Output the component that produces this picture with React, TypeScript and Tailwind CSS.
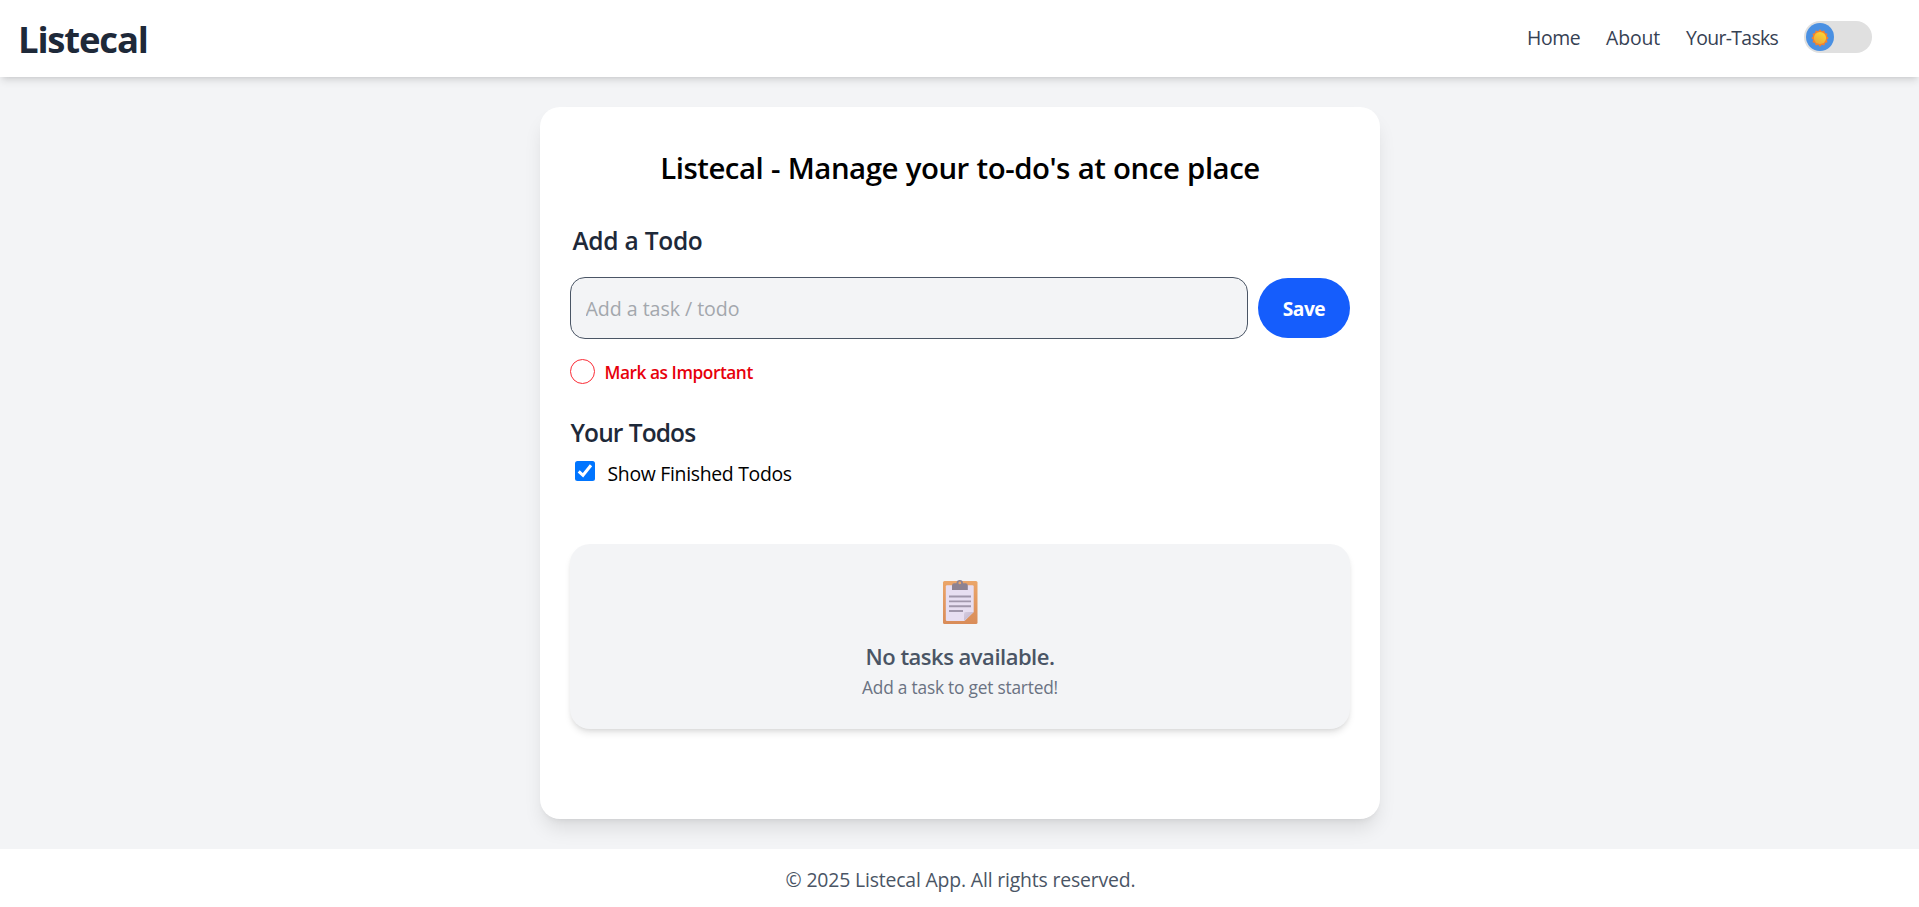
import { useState } from 'react';

function SunIcon() {
  const points = Array.from({ length: 24 }, (_, i) => {
    const r = i % 2 === 0 ? 8.7 : 7;
    const a = (i * Math.PI) / 12 - Math.PI / 2;
    return `${(9 + r * Math.cos(a)).toFixed(2)},${(9 + r * Math.sin(a)).toFixed(2)}`;
  }).join(' ');
  return (
    <svg viewBox="0 0 18 18" className="mt-[2px] size-[18px]" aria-hidden="true">
      <defs>
        <linearGradient id="sun" x1="0.8" y1="0.1" x2="0.3" y2="1">
          <stop offset="0" stopColor="#fbd535" />
          <stop offset="1" stopColor="#e9a83a" />
        </linearGradient>
      </defs>
      <polygon points={points} fill="#f5822c" />
      <circle cx="9" cy="9" r="6.1" fill="url(#sun)" />
    </svg>
  );
}

function ClipboardIcon() {
  return (
    <svg viewBox="0 0 36 44" className="h-[44px] w-[36px]" aria-hidden="true">
      <defs>
        <linearGradient id="board" x1="0" y1="0" x2="0" y2="1">
          <stop offset="0" stopColor="#eba66a" />
          <stop offset="1" stopColor="#d98c59" />
        </linearGradient>
        <linearGradient id="fold" x1="0" y1="0" x2="1" y2="1">
          <stop offset="0" stopColor="#d6cde1" />
          <stop offset="0.6" stopColor="#c6bad0" />
        </linearGradient>
      </defs>
      <rect x="1" y="1" width="34.5" height="43" rx="1.5" fill="url(#board)" />
      <path d="M5 5.300h25.500a1.200 1.200 0 0 1 1.200 1.200V32L22.500 41H5a1.200 1.200 0 0 1-1.200-1.200V6.500A1.200 1.200 0 0 1 5 5.300Z" fill="#e7def1" />
      <path d="M22 41V33.600a1.600 1.600 0 0 1 1.600-1.600h8.100Z" fill="url(#fold)" />
      <path d="M7 16.500h22M7 21.400h22M7 26.300h22M7 31h14" stroke="#a096ab" strokeWidth="1.900" />
      <path fillRule="evenodd" d="M14.500 3.200C14.500 1 15.800 0 17.800 0S21 1 21 3.200h2.500a2.300 2.300 0 0 1 2.300 2.300V10H10V5.500a2.300 2.300 0 0 1 2.300-2.300ZM17.800 1.500a1.400 1.400 0 1 0 0 2.800 1.400 1.400 0 0 0 0-2.800Z" fill="#8d8291" />
    </svg>
  );
}

function Navbar() {
  return (
    <nav className="relative flex h-[77px] shrink-0 items-center justify-between bg-white pr-[47px] pl-[18px] shadow-[0_5px_7.5px_-1.25px_rgba(0,0,0,0.1),0_2.5px_5px_-2.5px_rgba(0,0,0,0.1)]">
      <div className="text-[36.5px] leading-[50px] font-bold tracking-[-1.2px] text-gray-800">Listecal</div>
      <div className="mb-[3px] flex items-center gap-[25px] text-[19.4px] leading-[30px] whitespace-nowrap text-gray-700">
        <a className="w-[54px] pt-[2px] tracking-[-0.4px]">Home</a>
        <a className="w-[55px] pt-[2px] tracking-[-0.1px]">About</a>
        <a className="w-[93px] pt-[2px] tracking-[-0.65px]">Your-Tasks</a>
        <div className="flex h-[32px] w-[68px] items-center rounded-full bg-[#e0e0e0] p-[2px]">
          <div className="flex size-[28px] items-center justify-center rounded-full bg-[#4a90e2]">
            <SunIcon />
          </div>
        </div>
      </div>
    </nav>
  );
}

function CheckBox({ checked, onToggle }: { checked: boolean; onToggle: () => void }) {
  return (
    <button
      onClick={onToggle}
      className={checked ? 'size-[20px] rounded-[2.5px] bg-[#0075ff]' : 'size-[20px] rounded-[2.5px] border border-gray-500 bg-white'}
    >
      {checked && (
        <svg viewBox="0 0 20 20" className="size-[20px]" fill="none" stroke="white" strokeWidth="3" aria-hidden="true">
          <path d="M3.700 10.300 8 14.300 16 4.300" />
        </svg>
      )}
    </button>
  );
}

export default function App() {
  const [showFinished, setShowFinished] = useState(true);
  return (
    <div className="flex h-[907px] flex-col overflow-hidden bg-gray-100 font-['Open_Sans','Noto_Sans',sans-serif] text-black">
      <Navbar />
      <main className="flex flex-1 justify-center py-[30px]">
        <section className="flex w-[840px] flex-col rounded-[20px] bg-white px-[30px] pt-[41px] shadow-[0_12.5px_18.75px_-3.75px_rgba(0,0,0,0.1),0_5px_7.5px_-5px_rgba(0,0,0,0.1)]">
          <h1 className="pl-[1px] text-center text-[29.4px] leading-[40px] font-semibold tracking-[-0.48px] [word-spacing:0.6px]">
            Listecal - Manage your to-do's at once place
          </h1>
          <h2 className="mt-[34px] ml-[3px] text-[24.5px] leading-[37px] font-semibold tracking-[-0.38px] [word-spacing:0.5px] text-gray-800">Add a Todo</h2>
          <div className="mt-[18px] flex items-center gap-[10px]">
            <input
              placeholder="Add a task / todo"
              className="h-[62px] min-w-0 flex-1 rounded-[15px] border border-gray-600 bg-gray-100 px-[15px] text-[19.6px] tracking-[-0.05px] outline-none placeholder:text-[#a3a7ad]"
            />
            <button className="h-[60px] w-[92px] rounded-full bg-[#155dfc] pt-[2px] pl-[1px] text-[19.2px] font-bold tracking-[-0.5px] text-white">
              Save
            </button>
          </div>
          <div className="mt-[20px] flex h-[25px] items-center gap-[10px]">
            <span className="size-[25px] rounded-full border border-[#fb2c36]" />
            <span className="pt-[2px] text-[17.3px] leading-[25px] font-semibold tracking-[-0.45px] text-[#e7000b]">Mark as Important</span>
          </div>
          <h2 className="mt-[30px] ml-[1px] text-[24.5px] leading-[37px] font-semibold tracking-[-0.9px] [word-spacing:0.8px] text-gray-800">Your Todos</h2>
          <div className="mt-[10px] ml-[5px] flex items-start gap-[13px]">
            <CheckBox checked={showFinished} onToggle={() => setShowFinished(!showFinished)} />
            <span className="text-[19.4px] leading-[25px] tracking-[-0.3px]">Show Finished Todos</span>
          </div>
          <div className="mt-[58px] flex h-[185px] flex-col items-center rounded-[20px] bg-gray-100 pt-[36px] shadow-[0_5px_7.5px_-1.25px_rgba(0,0,0,0.1),0_2.5px_5px_-2.5px_rgba(0,0,0,0.1)]">
            <ClipboardIcon />
            <p className="mt-[17px] pl-[1px] text-[22px] leading-[31px] font-semibold tracking-[-0.5px] text-gray-600">No tasks available.</p>
            <p className="mt-[3px] pl-[1px] text-[17.3px] leading-[25px] tracking-[-0.2px] text-gray-500">Add a task to get started!</p>
          </div>
        </section>
      </main>
      <footer className="relative h-[58px] shrink-0 bg-white pt-[15px] pl-[2px] text-center text-[19.4px] leading-[31px] tracking-[-0.165px] text-gray-600">
        © 2025 Listecal App. All rights reserved.
      </footer>
    </div>
  );
}
